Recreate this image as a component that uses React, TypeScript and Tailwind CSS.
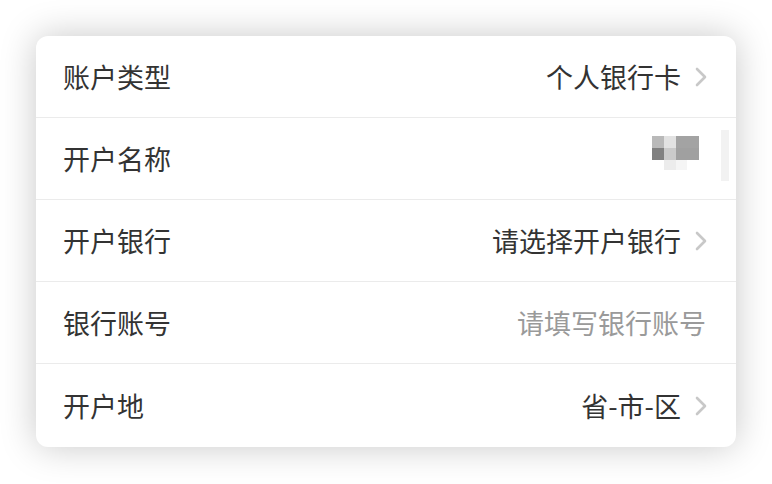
import React from "react";

type Row = {
	label: string;
	value?: string;
	placeholder?: string;
	arrow?: boolean;
	masked?: boolean;
};

const rows: Row[] = [
	{ label: "账户类型", value: "个人银行卡", arrow: true },
	{ label: "开户名称", masked: true },
	{ label: "开户银行", value: "请选择开户银行", arrow: true },
	{ label: "银行账号", placeholder: "请填写银行账号" },
	{ label: "开户地", value: "省-市-区", arrow: true },
];

const Chevron: React.FC = () => (
	<svg
		width="14"
		height="22"
		viewBox="0 0 14 22"
		fill="none"
		className="ml-[13px] shrink-0"
	>
		<path
			d="M3 3 L11 11 L3 19"
			stroke="#c8c8c8"
			strokeWidth="2.6"
			strokeLinecap="round"
			strokeLinejoin="round"
		/>
	</svg>
);

// blurred name, drawn as a few grey blocks
const MaskedName: React.FC = () => (
	<div className="flex items-center">
		<div className="flex flex-col mb-[12px]">
			<div className="flex">
				<div className="w-[12px] h-[12px] bg-[#b9b9b9]" />
				<div className="w-[12px] h-[12px] bg-[#e2e2e2]" />
				<div className="w-[23px] h-[12px] bg-[#a3a3a3]" />
			</div>
			<div className="flex">
				<div className="w-[12px] h-[12px] bg-[#808080]" />
				<div className="w-[12px] h-[12px] bg-[#cacaca]" />
				<div className="w-[23px] h-[12px] bg-[#a0a0a0]" />
			</div>
			<div className="flex">
				<div className="w-[12px] h-[10px]" />
				<div className="w-[12px] h-[10px] bg-[#ececec]" />
				<div className="w-[11px] h-[10px] bg-[#f5f5f5]" />
			</div>
		</div>
		<div className="ml-[22px] w-[8px] h-[51px] bg-[#f2f2f2] -mr-[21px] mb-[6px]" />
	</div>
);

export default function App() {
	return (
		<div
			className="w-[772px] h-[484px] bg-white pt-[36px] pl-[36px]"
			style={{ fontFamily: '"Noto Sans CJK SC", "Noto Sans", sans-serif' }}
		>
			<div className="w-[700px] bg-white rounded-[12px] shadow-[0_0_36px_rgba(0,0,0,0.22)] overflow-hidden">
				{rows.map((row, i) => (
					<div
						key={row.label}
						className={`h-[82px] flex items-center justify-between pl-[27px] pr-[28px] ${
							i < rows.length - 1 ? "border-b border-[#ebebeb]" : "h-[83px]"
						}`}
					>
						<span className="text-[27px] text-[#333333] leading-none">
							{row.label}
						</span>
						<div className="flex items-center">
							{row.value && (
								<span className="text-[27px] text-[#333333] leading-none">
									{row.value}
								</span>
							)}
							{row.placeholder && (
								<span className="text-[27px] text-[#9a9a9a] leading-none mr-[2px]">
									{row.placeholder}
								</span>
							)}
							{row.masked && <MaskedName />}
							{row.arrow && <Chevron />}
						</div>
					</div>
				))}
			</div>
		</div>
	);
}
